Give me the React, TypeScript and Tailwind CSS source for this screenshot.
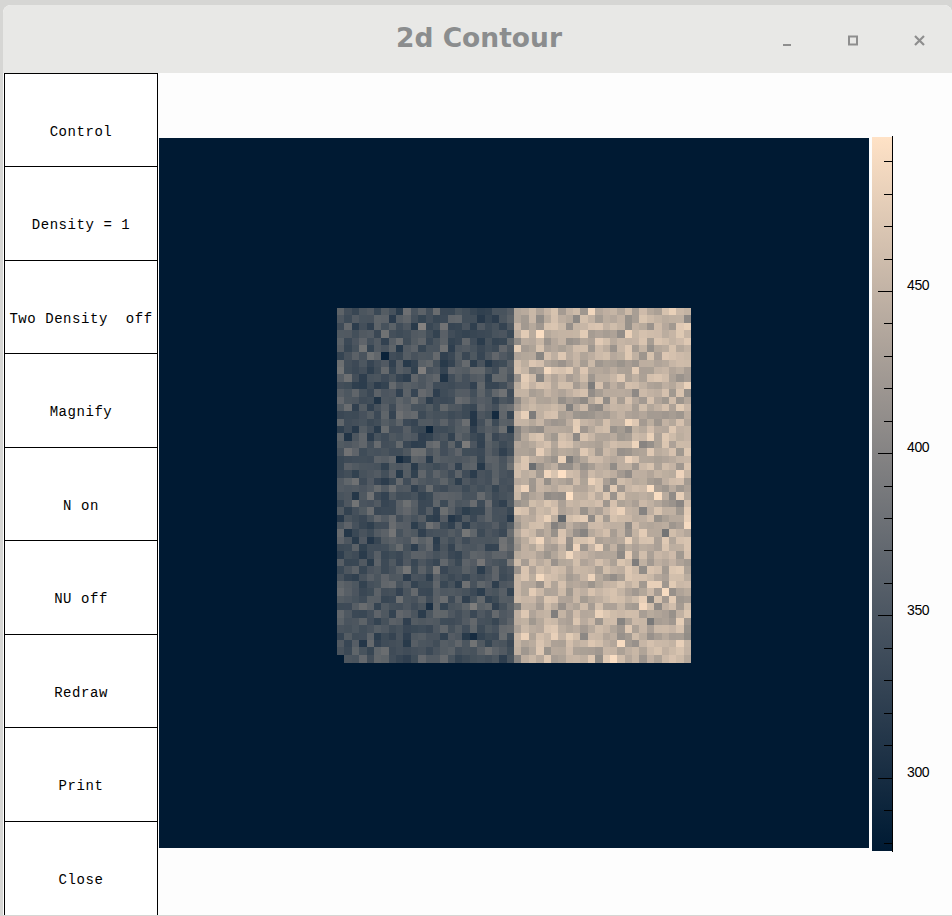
const buttons = [
  { label: "Control", box: "h-[93px]" },
  { label: "Density = 1", box: "h-[94px]" },
  { label: "Two Density  off", box: "h-[93px]" },
  { label: "Magnify", box: "h-[94px]" },
  { label: "N on", box: "h-[93px]" },
  { label: "NU off", box: "h-[94px]" },
  { label: "Redraw", box: "h-[93px]" },
  { label: "Print", box: "h-[94px]" },
  { label: "Close", box: "h-[95px]" },
];

const CELLS = 48;
const CELL = 354 / CELLS;

// colour ramp of the plot: dark navy up to pale peach
const shade = (t: number) => {
  const c = Math.max(0, Math.min(1, t));
  const r = Math.round(0 + c * 255);
  const g = Math.round(26 + c * (226 - 26));
  const b = Math.round(51 + c * (198 - 51));
  return `rgb(${r},${g},${b})`;
};

let seed = 20240611;
const rand = () => {
  seed = (seed * 1664525 + 1013904223) % 4294967296;
  return seed / 4294967296;
};
const noise = () => {
  const base = (rand() + rand() + rand() - 1.5) / 1.5;
  const tail = rand() < 0.09 ? (rand() < 0.5 ? -0.4 : 0.4) : 0;
  return base + tail;
};

// the few cells that stand out in the plot, keyed by column-row
const outliers: Record<string, number> = {
  "6-6": 0.04,
  "8-4": 0.42,
  "11-8": 0.5,
  "12-16": 0.05,
  "27-3": 0.98,
  "28-8": 0.95,
  "42-24": 0.98,
  "21-14": 0.08,
  "26-21": 0.42,
  "30-28": 0.38,
  "44-38": 0.97,
  "37-47": 0.98,
};

const cells: { x: number; y: number; fill: string }[] = [];
for (let y = 0; y < CELLS; y++) {
  for (let x = 0; x < CELLS; x++) {
    if (y === CELLS - 1 && x === 0) continue;
    const left = x < CELLS / 2;
    const t = (left ? 0.29 : 0.74) + noise() * (left ? 0.2 : 0.27);
    cells.push({ x, y, fill: shade(outliers[`${x}-${y}`] ?? t) });
  }
}

const majors = [290, 452, 614, 777];
const minors = [160, 193, 225, 258, 322, 355, 387, 420, 485, 517, 549, 582, 647, 679, 712, 744, 809, 842];
const labels = [
  { text: "450", y: 284 },
  { text: "400", y: 446 },
  { text: "350", y: 609 },
  { text: "300", y: 771 },
];

const Heatmap = () => (
  <svg width={354} height={355} viewBox="0 0 354 355" shapeRendering="crispEdges">
    {cells.map((c) => (
      <rect
        key={`${c.x}-${c.y}`}
        x={c.x * CELL}
        y={c.y * CELL}
        width={CELL + 0.5}
        height={CELL + 0.5}
        fill={c.fill}
      />
    ))}
  </svg>
);

const ColorBar = () => (
  <div className="relative mt-[-2px] w-[21px] h-[716px]">
    <div className="mt-px w-5 h-[714px] bg-gradient-to-b from-[#ffe2c6] to-[#001a33]" />
    <svg
      className="absolute left-0 top-0 overflow-visible"
      width={21}
      height={716}
      viewBox="872 135 21 716"
      shapeRendering="crispEdges"
    >
      <line x1={892.5} x2={892.5} y1={135} y2={851} stroke="#000" />
      {majors.map((y) => (
        <line key={y} x1={878} x2={892} y1={y + 0.5} y2={y + 0.5} stroke="#000" />
      ))}
      {minors.map((y) => (
        <line key={y} x1={884} x2={892} y1={y + 0.5} y2={y + 0.5} stroke="#000" />
      ))}
    </svg>
    {labels.map((l) => (
      <span
        key={l.text}
        className="absolute left-[35px] -translate-y-1/2 font-['Liberation_Sans',sans-serif] text-[14px] leading-none tracking-[-0.4px] text-black"
        style={{ top: l.y - 135 }}
      >
        {l.text}
      </span>
    ))}
  </div>
);

const WindowControls = () => (
  <div className="flex items-center justify-end pr-[27px] pt-[4px]">
    <svg width={8} height={12} viewBox="0 0 8 12" className="mr-[57px]">
      <rect x={0} y={9} width={8} height={2} fill="#8e8e8e" />
    </svg>
    <svg width={10} height={12} viewBox="0 0 10 12" className="mr-[56px]">
      <rect x={1} y={1.5} width={8} height={8} fill="none" stroke="#8e8e8e" strokeWidth={2} />
    </svg>
    <svg width={11} height={12} viewBox="0 0 11 12">
      <path d="M1 1 L10 10 M10 1 L1 10" stroke="#8e8e8e" strokeWidth={2.2} fill="none" />
    </svg>
  </div>
);

export default function App() {
  return (
    <div className="w-[952px] h-[916px] overflow-hidden bg-[#d6d6d4] pl-[3px] pt-[5px]">
      <div className="flex flex-col h-[910px] rounded-tl-[8px] rounded-tr-[8px] overflow-hidden bg-[#fdfdfd]">
        <div className="grid grid-cols-[1fr_auto_1fr] items-center h-[68px] shrink-0 bg-[#e8e8e6]">
          <div />
          <div className="pb-[2px] pl-[3px] font-['DejaVu_Sans',sans-serif] font-bold text-[26.5px] leading-none text-[#8b8d8e]">
            2d Contour
          </div>
          <WindowControls />
        </div>
        <div className="flex flex-1">
          <div className="ml-px w-[154px] shrink-0 flex flex-col">
            {buttons.map((b) => (
              <div
                key={b.label}
                className={`${b.box} bg-white border-x border-t border-black flex justify-center pt-[47px]`}
              >
                <span className="font-['Liberation_Mono',monospace] text-[14px] leading-[22px] tracking-[0.55px] whitespace-pre text-black">
                  {b.label}
                </span>
              </div>
            ))}
          </div>
          <div className="ml-px pt-[65px] flex items-start gap-[3px]">
            <div className="w-[710px] h-[710px] bg-[#001a33] flex justify-center pt-[170px]">
              <Heatmap />
            </div>
            <ColorBar />
          </div>
        </div>
      </div>
    </div>
  );
}
